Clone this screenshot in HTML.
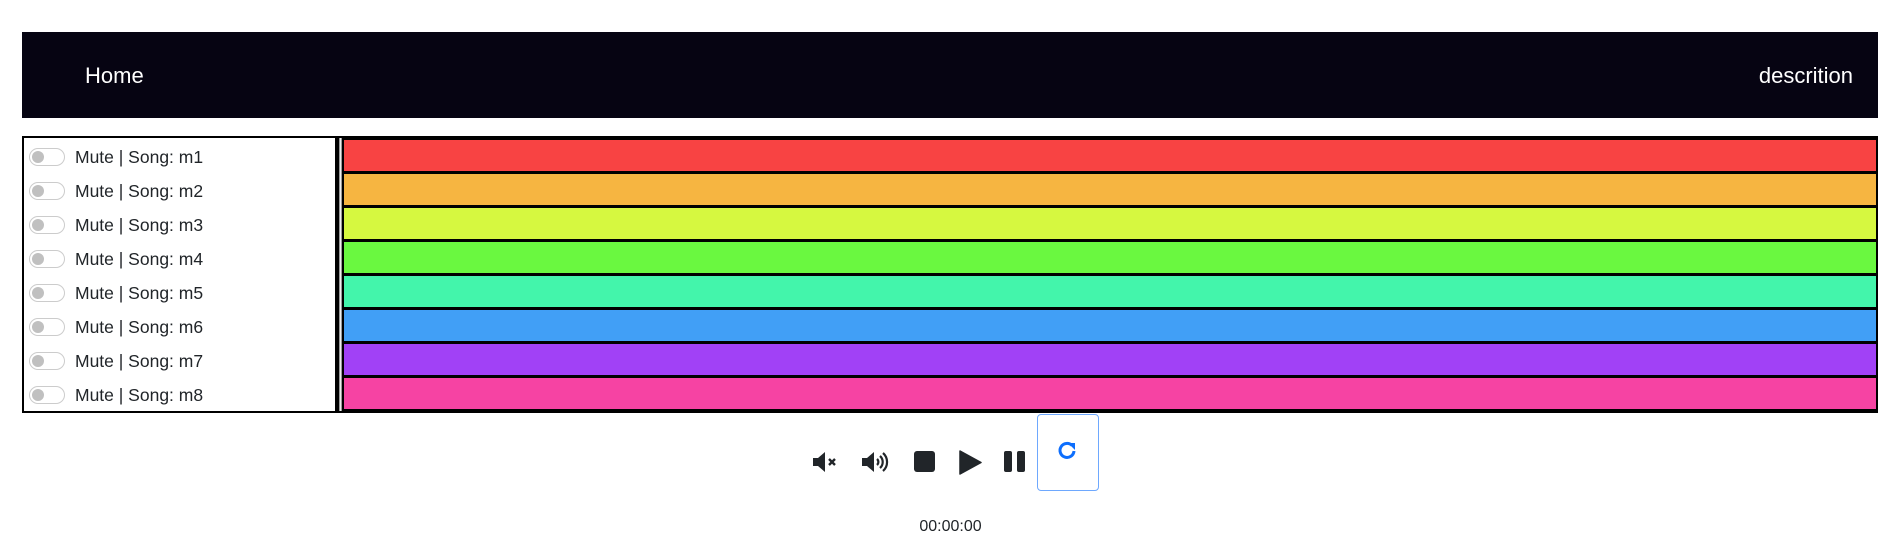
<!DOCTYPE html>
<html><head><meta charset="utf-8"><style>
body{margin:0;width:1901px;height:558px;background:#fff;font-family:"Liberation Sans",sans-serif;position:relative;overflow:hidden}
.nav{position:absolute;left:22px;top:32px;width:1856px;height:86px;background:#060412;color:#fff;font-size:22px}
.nav span{position:absolute;top:31px}
.box{position:absolute;left:22px;top:136px;width:1852px;height:273px;border:2px solid #000;background:#000}
.left{position:absolute;left:0;top:0;width:311px;height:273px;background:#fff;border-right:2px solid #000}
.row{position:absolute;left:0;height:34px;width:311px}
.tg{position:absolute;left:5px;top:10px;width:34px;height:16px;border:1px solid #ccc;border-radius:9px;background:#fff}
.tg:after{content:"";position:absolute;left:2px;top:2px;width:12px;height:12px;border-radius:50%;background:#c0c0c0}
.lb{position:absolute;left:51px;top:9px;font-size:17.5px;color:#212529}
.ph{position:absolute;left:315px;top:0;width:1px;height:273px;background:#eee;border-left:1px solid #999;border-right:1px solid #999}
.bar{position:absolute;left:320px;width:1532px;height:31px}
svg{position:absolute}
</style></head><body>
<div class="nav"><span style="left:63px">Home</span><span style="right:25px">descrition</span></div>
<div class="box">
<div class="left">
<div class="row" style="top:0"><div class="tg"></div><div class="lb">Mute | Song: m1</div></div>
<div class="row" style="top:34px"><div class="tg"></div><div class="lb">Mute | Song: m2</div></div>
<div class="row" style="top:68px"><div class="tg"></div><div class="lb">Mute | Song: m3</div></div>
<div class="row" style="top:102px"><div class="tg"></div><div class="lb">Mute | Song: m4</div></div>
<div class="row" style="top:136px"><div class="tg"></div><div class="lb">Mute | Song: m5</div></div>
<div class="row" style="top:170px"><div class="tg"></div><div class="lb">Mute | Song: m6</div></div>
<div class="row" style="top:204px"><div class="tg"></div><div class="lb">Mute | Song: m7</div></div>
<div class="row" style="top:238px"><div class="tg"></div><div class="lb">Mute | Song: m8</div></div>
</div>
<div class="bar" style="top:2px;background:#f84343"></div>
<div class="bar" style="top:36px;background:#f6b541"></div>
<div class="bar" style="top:70px;background:#d6f840"></div>
<div class="bar" style="top:104px;background:#6af840"></div>
<div class="bar" style="top:138px;background:#43f5ab"></div>
<div class="bar" style="top:172px;background:#419ff6"></div>
<div class="bar" style="top:206px;background:#a141f6"></div>
<div class="bar" style="top:240px;background:#f643a3"></div>
<div class="ph"></div>
</div>
<svg style="left:813px;top:452px" width="26" height="20" viewBox="0 0 26 20"><path d="M0 6h5l7-6v20l-7-6H0z" fill="#212529"/><path d="M16 7l6 6M22 7l-6 6" stroke="#212529" stroke-width="2.4"/></svg>
<svg style="left:862px;top:450px" width="30" height="24" viewBox="0 0 30 24"><path d="M0 8h5l7-6v20l-7-6H0z" fill="#212529"/><path d="M15 9a4 4 0 0 1 0 6M18 6a8 8 0 0 1 0 12M21 3a12 12 0 0 1 0 18" stroke="#212529" stroke-width="2.2" fill="none"/></svg>
<div style="position:absolute;left:914px;top:451px;width:21px;height:21px;background:#212529;border-radius:3px"></div>
<svg style="left:959px;top:450px" width="23" height="25" viewBox="0 0 23 25"><path d="M1 1L22 12.5 1 24z" fill="#212529" stroke="#212529" stroke-linejoin="round" stroke-width="1.5"/></svg>
<div style="position:absolute;left:1004px;top:451px;width:8px;height:21px;background:#212529;border-radius:2px"></div>
<div style="position:absolute;left:1017px;top:451px;width:8px;height:21px;background:#212529;border-radius:2px"></div>
<div style="position:absolute;left:1037px;top:414px;width:60px;height:75px;border:1px solid #6ea8fe;border-radius:4px"></div>
<svg style="left:1056px;top:440px" width="22" height="22" viewBox="0 0 22 22"><path d="M16 5.5A7 7 0 1 0 18 11" stroke="#0d6efd" stroke-width="3" fill="none"/><path d="M12 3h7v7z" fill="#0d6efd"/></svg>
<div style="position:absolute;left:0;width:1901px;top:518px;text-align:center;font-size:16px;color:#212529">00:00:00</div>
</body></html>
